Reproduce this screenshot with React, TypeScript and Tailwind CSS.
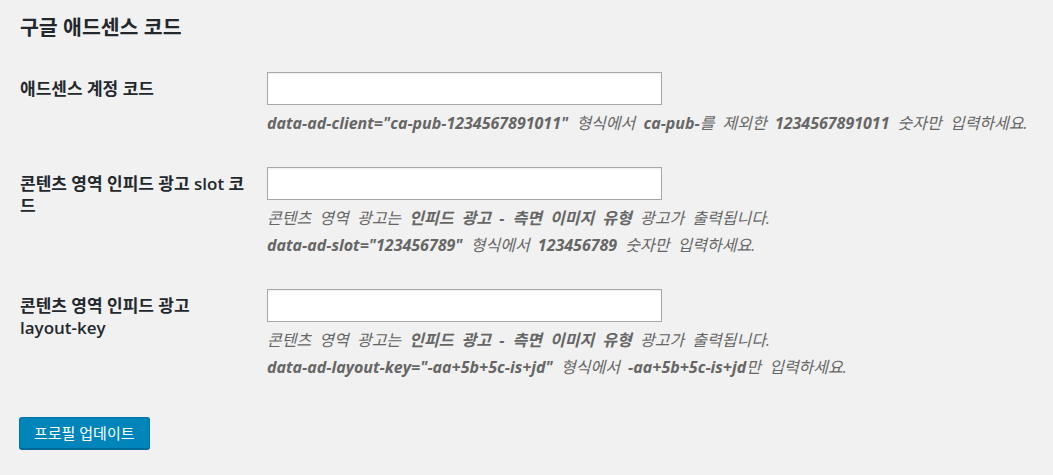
import React from "react";

const font = { fontFamily: '"Open Sans", "Noto Sans CJK KR", sans-serif' };

function Row({
  label,
  children,
  padTop = "pt-[15px]",
}: {
  label: React.ReactNode;
  children: React.ReactNode;
  padTop?: string;
}) {
  return (
    <div className={`flex ${padTop} pb-[15px]`}>
      <div className="w-[227px] shrink-0 pt-[6px] text-[17px] leading-[22px] font-semibold text-[#23282d]">
        {label}
      </div>
      <div className="ml-[20px] flex-1">
        <div className="h-[33px] w-[395px] border border-[#a8a8a8] bg-white shadow-[inset_0_1px_2px_rgba(0,0,0,0.07)]" />
        <div className="mt-[5px] text-[16px] leading-[27px] italic text-[#666] [word-spacing:4px]">{children}</div>
      </div>
    </div>
  );
}

export default function App() {
  return (
    <div className="min-h-screen bg-[#f1f1f1] px-[20px] pt-[15px]" style={font}>
      <h2 className="text-[20.5px] leading-[24px] font-semibold text-[#23282d]">구글 애드센스 코드</h2>
      <div className="mt-[33px]">
        <Row label="애드센스 계정 코드" padTop="pt-0">
          <p>
            <b>data-ad-client="ca-pub-1234567891011"</b> 형식에서 <b>ca-pub-</b>를 제외한{" "}
            <b>1234567891011</b> 숫자만 입력하세요.
          </p>
        </Row>
        <Row label="콘텐츠 영역 인피드 광고 slot 코드">
          <p>
            콘텐츠 영역 광고는 <b>인피드 광고 - 측면 이미지 유형</b> 광고가 출력됩니다.
          </p>
          <p>
            <b>data-ad-slot="123456789"</b> 형식에서 <b>123456789</b> 숫자만 입력하세요.
          </p>
        </Row>
        <Row label="콘텐츠 영역 인피드 광고 layout-key">
          <p>
            콘텐츠 영역 광고는 <b>인피드 광고 - 측면 이미지 유형</b> 광고가 출력됩니다.
          </p>
          <p>
            <b>data-ad-layout-key="-aa+5b+5c-is+jd"</b> 형식에서 <b>-aa+5b+5c-is+jd</b>만 입력하세요.
          </p>
        </Row>
      </div>
      <button className="mt-[21px] ml-[-1px] h-[32px] rounded-[3px] border border-[#0073aa] border-b-[#006799] bg-[#0085ba] px-[14px] text-[15px] leading-[28px] text-white shadow-[0_1px_0_#006799]">
        프로필 업데이트
      </button>
    </div>
  );
}
